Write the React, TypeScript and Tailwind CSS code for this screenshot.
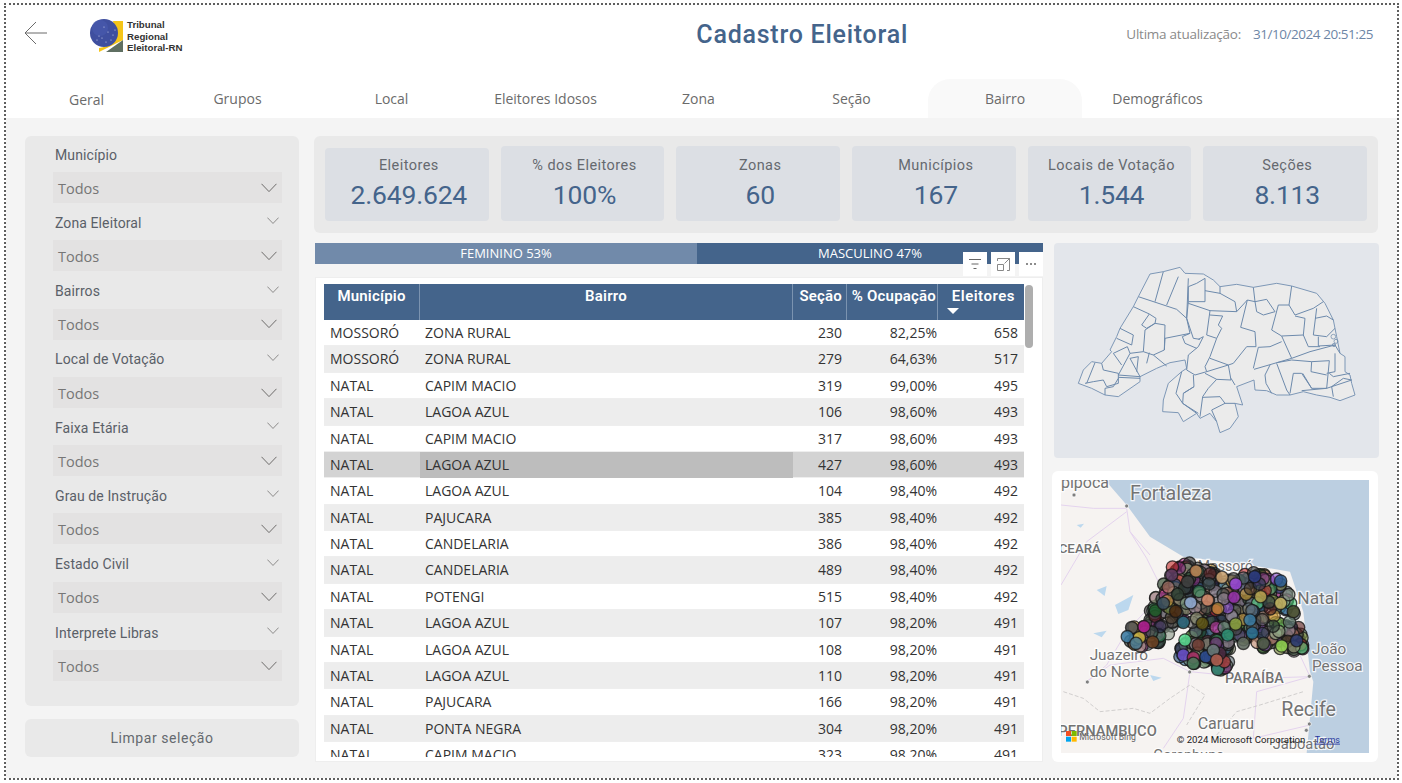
import { useMemo } from 'react';

const din = 'font-[Roboto,sans-serif]';
const segoe = "font-['Open_Sans',sans-serif]";

const tabs = ['Geral', 'Grupos', 'Local', 'Eleitores Idosos', 'Zona', 'Seção', 'Bairro', 'Demográficos'];

const filters = [
  { label: 'Município', chevron: false },
  { label: 'Zona Eleitoral', chevron: true },
  { label: 'Bairros', chevron: true },
  { label: 'Local de Votação', chevron: true },
  { label: 'Faixa Etária', chevron: true },
  { label: 'Grau de Instrução', chevron: true },
  { label: 'Estado Civil', chevron: true },
  { label: 'Interprete Libras', chevron: true },
];

const kpis = [
  { label: 'Eleitores', value: '2.649.624', tall: false },
  { label: '% dos Eleitores', value: '100%', tall: true },
  { label: 'Zonas', value: '60', tall: true },
  { label: 'Municípios', value: '167', tall: true },
  { label: 'Locais de Votação', value: '1.544', tall: true },
  { label: 'Seções', value: '8.113', tall: true },
];

const rows = [
  ['MOSSORÓ', 'ZONA RURAL', '230', '82,25%', '658'],
  ['MOSSORÓ', 'ZONA RURAL', '279', '64,63%', '517'],
  ['NATAL', 'CAPIM MACIO', '319', '99,00%', '495'],
  ['NATAL', 'LAGOA AZUL', '106', '98,60%', '493'],
  ['NATAL', 'CAPIM MACIO', '317', '98,60%', '493'],
  ['NATAL', 'LAGOA AZUL', '427', '98,60%', '493'],
  ['NATAL', 'LAGOA AZUL', '104', '98,40%', '492'],
  ['NATAL', 'PAJUCARA', '385', '98,40%', '492'],
  ['NATAL', 'CANDELARIA', '386', '98,40%', '492'],
  ['NATAL', 'CANDELARIA', '489', '98,40%', '492'],
  ['NATAL', 'POTENGI', '515', '98,40%', '492'],
  ['NATAL', 'LAGOA AZUL', '107', '98,20%', '491'],
  ['NATAL', 'LAGOA AZUL', '108', '98,20%', '491'],
  ['NATAL', 'LAGOA AZUL', '110', '98,20%', '491'],
  ['NATAL', 'PAJUCARA', '166', '98,20%', '491'],
  ['NATAL', 'PONTA NEGRA', '304', '98,20%', '491'],
  ['NATAL', 'CAPIM MACIO', '323', '98,20%', '491'],
];

const Chevron = ({ size = 16 }: { size?: number }) => (
  <svg width={size} height={size * 0.6} viewBox="0 0 16 9.6" fill="none" stroke="#605e5c" strokeWidth="0.9">
    <path d="M0.5 0.8 L8 8.6 L15.5 0.8" />
  </svg>
);

const Logo = () => (
  <svg width="42" height="36" viewBox="0 0 42 36">
    <path d="M11 34 L11 30 C22 29 27 22 27 14 L25 3 L35 3 L35 22 Z" fill="#f5c518" />
    <path d="M18 34 L35 22 L35 34 Z" fill="#5f6f62" />
    <circle cx="16" cy="15" r="14" fill="#3f4f9f" />
    <circle cx="12" cy="10" r="8" fill="#4a5bb0" opacity="0.6" />
    {[[20, 14], [25, 17], [14, 20], [9, 22], [18, 24], [23, 22], [16, 9], [11, 18], [27, 12]].map(([x, y]) => (
      <circle key={`${x}-${y}`} cx={x} cy={y} r="0.6" fill="#cdd3ee" />
    ))}
  </svg>
);

const outlinePts = [
  [300, 102], [340, 95], [390, 82], [405, 100], [460, 102], [490, 120], [510, 140], [560, 133], [610, 142], [680, 130], [725, 138],
  [800, 160], [825, 190], [850, 240], [860, 290], [870, 340], [885, 350], [885, 395], [900, 405], [905, 430], [915, 465], [870, 482],
  [840, 472], [800, 465], [760, 455], [720, 465], [680, 465], [650, 452], [615, 450], [612, 420], [560, 440], [578, 495], [555, 490],
  [565, 530], [540, 565], [510, 578], [500, 545], [480, 520], [450, 535], [440, 520], [400, 545], [385, 518], [338, 515], [340, 480],
  [355, 430], [395, 395], [410, 385], [405, 360], [360, 368], [320, 385], [270, 410], [270, 425], [205, 470], [165, 465], [125, 445],
  [85, 430], [100, 390], [125, 365], [155, 370], [185, 335], [180, 330], [200, 290], [210, 265], [250, 200], [265, 170],
];

const outline = `M${outlinePts.map((p) => p.join(',')).join(' ')} Z`;

const borders = [
  'M340,95 315,185', 'M385,110 350,195', 'M265,170 380,208 410,235 415,185 465,185 465,115 440,130 415,140 415,185',
  'M415,115 410,235 430,295 450,298', 'M415,190 480,212 560,215 555,185 510,160 465,152', 'M510,140 510,160',
  'M610,142 615,185 620,215 640,225 675,215 650,178 615,185', 'M560,215 592,180 615,185', 'M592,180 572,262 615,275 618,320',
  'M725,138 717,195 735,225 790,205 820,185', 'M717,195 685,195 665,270 695,288 760,285 775,320 810,320',
  'M735,228 765,235 760,285', 'M800,205 790,285 830,290 855,265', 'M795,235 830,228 850,240', 'M805,290 805,318 855,315 870,340',
  'M695,288 725,355 780,335 855,315', 'M695,305 660,320 625,322 610,385', 'M725,355 612,388', 'M618,320 590,320 550,370 535,375 480,355',
  'M480,212 470,285 500,295 515,265 505,255 518,228 480,225', 'M500,295 480,350 465,380 470,395 435,405 410,390 415,345 445,320 460,290 445,298',
  'M410,235 420,280 397,290 405,310 440,325', 'M420,280 345,295 343,330 310,345 280,335 285,270 315,250 345,255 343,330',
  'M298,222 275,255 290,265 315,250 318,235 298,222', 'M250,200 298,222', 'M250,285 210,265', 'M250,285 245,315 200,295', 'M280,335 240,340 232,320 190,340 215,375',
  'M310,345 350,378', 'M240,340 205,405 270,410 240,355 265,350 260,395', 'M298,338 290,370', 'M155,370 160,390 205,400 205,430 170,440 160,420 130,425 105,430',
  'M135,368 110,430', 'M205,415 190,440 165,445 165,465', 'M270,415 205,412', 'M470,395 535,375 543,420 500,418 465,400', 'M500,418 475,445 458,470 450,530',
  'M430,405 432,440 400,460 398,490 440,520', 'M395,395 378,460 398,490', 'M432,440 400,460', 'M458,472 510,470 525,490 485,510 500,545', 'M398,490 445,520',
  'M525,490 555,490', 'M543,415 555,435', 'M680,370 710,450 720,465', 'M660,375 645,405 648,430 665,460', 'M680,368 725,360 785,365 838,362 830,445 785,445 755,400 730,400 720,460',
  'M785,365 783,395 830,405', 'M758,400 785,445', 'M855,340 855,395 830,400', 'M830,445 905,420 880,415 845,440 850,470', 'M838,400 850,410 900,400', 'M755,452 830,445',
];

const cityLoops = [[850, 290, 7], [858, 304, 6], [852, 315, 5]];

const RnMap = () => (
  <svg viewBox="0 0 1020 690" className="block h-[230px] w-[340px] max-w-none" fill="none">
    <path d={outline} fill="#ebebeb" stroke="#7d97b6" strokeWidth="3" strokeLinejoin="round" />
    {borders.map((d) => (
      <path key={d} d={d} stroke="#6d8aac" strokeWidth="3" strokeLinejoin="round" />
    ))}
    {cityLoops.map(([cx, cy, r]) => (
      <circle key={cx + cy} cx={cx} cy={cy} r={r} stroke="#6d8aac" strokeWidth="2.2" />
    ))}
  </svg>
);

const dotColors = [
  '#2f2f2f', '#3a3a3a', '#1f3b1f', '#4a3a2a', '#2a3a55', '#3b4a4a', '#555555', '#7a2a7a', '#c23fa0', '#2e8b57', '#6fae4f', '#8a4fd0',
  '#b9776a', '#3e7aa8', '#7f8f3f', '#4fd07a', '#5a2020', '#9a9a7a', '#274e7a', '#d0a040', '#c22f2f', '#202040', '#60707a', '#404040',
  '#8a9a8a', '#a0a888', '#33443a', '#7a8a9a', '#8fb08f', '#c08a70', '#6a8a7a', '#9a8a9a',
];

const hilite = [
  [557, 357, '#9a48d8'], [695, 543, '#8fd050'], [405, 525, '#58d890'], [400, 570, '#6a50c8'], [430, 578, '#a02860'], [503, 613, '#3a8a78'],
  [268, 518, '#c8b040'], [523, 590, '#a04040'], [468, 575, '#2a4a90'], [445, 540, '#6a3a30'], [308, 531, '#6a4020'], [600, 465, '#3a7aa0'],
  [632, 395, '#b0a050'], [692, 415, '#c0b060'], [730, 440, '#4a5030'], [422, 413, '#90a8d0'], [473, 405, '#d08868'], [552, 397, '#9030a0'],
  [614, 335, '#2a3a80'], [692, 348, '#2a5a90'], [516, 337, '#c8a070'], [413, 350, '#404040'], [438, 318, '#b87a50'], [365, 330, '#5a3a60'],
  [316, 437, '#1f5a28'], [377, 439, '#4a2a10'], [557, 477, '#8aa040'], [607, 504, '#2a6a90'], [533, 510, '#2a8a70'], [740, 527, '#2a3a70'],
  [457, 475, '#5a5010'], [282, 485, '#b02090'], [383, 388, '#2a3a30'], [340, 415, '#3a5060'], [400, 472, '#2a6a7a'],
  [510, 565, '#4a2a40'], [490, 556, '#6a7a7a'], [430, 595, '#4a7a5a'], [500, 585, '#b06050'], [580, 535, '#606a60'], [640, 535, '#4a5a40'],
  [245, 488, '#555555'], [232, 515, '#3a7aa0'], [258, 535, '#4a7a90'],
] as const;

const inside = (x: number, y: number) => {
  let hit = false;
  for (let i = 0, j = outlinePts.length - 1; i < outlinePts.length; j = i++) {
    const [xi, yi] = outlinePts[i];
    const [xj, yj] = outlinePts[j];
    if (yi > y !== yj > y && x < ((xj - xi) * (y - yi)) / (yj - yi) + xi) hit = !hit;
  }
  return hit;
};

// sorteia pontos dentro do contorno do estado e leva para as coordenadas do mapa
const useDots = () =>
  useMemo(() => {
    let seed = 41;
    const rnd = () => {
      seed = (seed * 16807) % 2147483647;
      return seed / 2147483647;
    };
    const out: { x: number; y: number; c: string }[] = [];
    while (out.length < 560) {
      const sx = 85 + rnd() * 830;
      const sy = 82 + rnd() * 496;
      if (!inside(sx, sy)) continue;
      out.push({
        x: 222 + (sx - 85) * 0.655,
        y: 290 + (sy - 82) * 0.68,
        c: dotColors[Math.floor(rnd() * dotColors.length)],
      });
    }
    return out;
  }, []);

const labelClass = 'fill-[#737373] stroke-white/80 font-[Roboto,sans-serif] [paint-order:stroke]';

const BingMap = () => {
  const dots = useDots();
  return (
    <svg viewBox="33 45 924 819" className="block h-[273px] w-[308px]">
      <rect x="33" y="45" width="924" height="819" fill="#f6f3f1" />
      <path d="M165,45 L230,120 L300,215 L400,275 L600,300 L720,320 L760,440 L780,620 L790,650 L770,864 L957,864 L957,45 Z" fill="#bccfe1" />
      <g fill="none" stroke="#e4d3ee" strokeWidth="3">
        <path d="M33,120 L130,130 L230,130 L240,200 L300,270" />
        <path d="M230,140 L110,230 L33,360" />
        <path d="M240,200 L290,280 L340,380 L230,500 L170,600 L110,650" />
        <path d="M110,650 L180,600 L340,580 L420,620 L620,640 L780,635" />
        <path d="M420,620 L400,760 L340,850" />
        <path d="M780,635 L620,680 L610,820 L780,780" />
        <path d="M745,560 L780,635" />
      </g>
      <g fill="#bcd8ee">
        <path d="M80,180 l22,-4 l-10,12 Z" />
        <path d="M140,375 l30,-12 l-6,30 Z" />
        <path d="M195,420 l55,-30 l-15,45 l-30,12 Z" />
        <path d="M130,505 l40,-8 l-15,20 Z" />
        <path d="M300,630 l35,8 l-25,10 Z" />
      </g>
      <path d="M40,680 L100,700 L150,740 L250,730 L300,745 L360,700 L420,660 L465,690 L410,780" fill="none" stroke="#c9c6c6" strokeWidth="2.5" strokeDasharray="12 6" />
      <path d="M500,810 L560,740 L630,720 L760,680" fill="none" stroke="#c9c6c6" strokeWidth="2.5" strokeDasharray="12 6" />
      <g fill="#7f7f7f">
        {[[72, 90], [230, 123], [112, 651], [419, 621], [778, 634], [778, 777], [769, 796]].map(([x, y]) => (
          <circle key={`${x}-${y}`} cx={x} cy={y} r="6" stroke="#fff" strokeWidth="2" />
        ))}
      </g>
      <g strokeWidth="7" className={labelClass}>
        <text x="240" y="105" fontSize="59">Fortaleza</text>
        <text x="33" y="68" fontSize="48" textAnchor="start" dx="-55">Itapipoca</text>
        <text x="26" y="264" fontSize="40" fontWeight="500">CEARÁ</text>
        <text x="443" y="318" fontSize="42">Mossoró</text>
        <text x="742" y="416" fontSize="52">Natal</text>
        <text x="786" y="567" fontSize="46">João</text>
        <text x="786" y="619" fontSize="46">Pessoa</text>
        <text x="119" y="585" fontSize="46">Juazeiro</text>
        <text x="119" y="637" fontSize="46">do Norte</text>
        <text x="525" y="654" fontSize="43" fontWeight="500">PARAÍBA</text>
        <text x="694" y="752" fontSize="59">Recife</text>
        <text x="443" y="792" fontSize="48">Caruaru</text>
        <text x="25" y="812" fontSize="44" fontWeight="500">PERNAMBUCO</text>
        <text x="668" y="853" fontSize="44">Jaboatão</text>
        <text x="310" y="884" fontSize="44">Garanhuns</text>
      </g>
      {dots.map((d, i) => (
        <circle key={i} cx={d.x} cy={d.y} r="18.5" fill={d.c} fillOpacity="0.62" stroke="#161616" strokeOpacity="0.8" strokeWidth="4" />
      ))}
      {hilite.map(([x, y, c]) => (
        <circle key={`${x}-${y}`} cx={x} cy={y} r="18.5" fill={c} fillOpacity="0.88" stroke="#161616" strokeOpacity="0.75" strokeWidth="4" />
      ))}
      <g>
        <rect x="48" y="798" width="15" height="15" fill="#f25022" />
        <rect x="65" y="798" width="15" height="15" fill="#7fba00" />
        <rect x="48" y="815" width="15" height="15" fill="#00a4ef" />
        <rect x="65" y="815" width="15" height="15" fill="#ffb900" />
        <text x="88" y="824" fontSize="26" className="fill-[#666] font-[Roboto,sans-serif]">Microsoft Bing</text>
        <text x="380" y="833" fontSize="29" className="fill-[#222] font-[Roboto,sans-serif]">© 2024 Microsoft Corporation</text>
        <text x="794" y="833" fontSize="27" textDecoration="underline" className="fill-[#2b3a9f] font-[Roboto,sans-serif]">Terms</text>
      </g>
    </svg>
  );
};

const Filter = ({ label, chevron }: { label: string; chevron: boolean }) => (
  <div className="flex h-[68.3px] flex-col">
    <div className={`flex h-[36px] items-center justify-between pl-[30px] pr-[20px] pt-[2px] ${din} text-[14px] tracking-[0.1px] text-[#5a6068]`}>
      <span>{label}</span>
      {chevron && (
        <span className="mb-[5px]">
          <Chevron size={12} />
        </span>
      )}
    </div>
    <div className={`ml-[28px] mr-[17px] flex h-[31px] items-center justify-between bg-[#e3e2e2] pl-[5px] pr-[5px] ${segoe} text-[14.5px] text-[#767676]`}>
      <span className="pt-[2px]">Todos</span>
      <Chevron size={16} />
    </div>
  </div>
);

const Kpi = ({ label, value, tall }: { label: string; value: string; tall: boolean }) => (
  <div className={`flex flex-1 flex-col items-center justify-end rounded-[4px] bg-[#dcdfe4] pb-[9px] pl-[4px] ${din} ${tall ? 'h-[75px]' : 'h-[73px]'}`}>
    <span className="text-[14.5px] leading-[22px] tracking-[0.45px] text-[#65696f]">{label}</span>
    <span className="mt-[1px] text-[26.5px] leading-[34px] tracking-[-0.2px] text-[#44648b]">{value}</span>
  </div>
);

const cols = 'grid grid-cols-[96px_373px_54px_91px_86px]';

const Table = () => (
  <div className="relative mt-[13px] h-[485px] border border-[#eeeeee] bg-white pl-[8px] pr-[18px] pt-[6px]">
    <div className={`${cols} h-[36px] whitespace-nowrap bg-[#44648b] ${din} text-[15px] font-semibold leading-[24px] tracking-[0.2px] text-white`}>
      <span className="border-r border-[#7b93b0] text-center">Município</span>
      <span className="border-r border-[#7b93b0] text-center">Bairro</span>
      <span className="border-r border-[#7b93b0] pr-[4px] text-right">Seção</span>
      <span className="border-r border-[#7b93b0] pr-[1px] text-right">% Ocupação</span>
      <span className="relative pr-[9px] text-right tracking-[0.5px]">
        Eleitores
        <i className="absolute left-[9px] top-[24px] h-0 w-0 border-x-[6px] border-t-[6px] border-x-transparent border-t-white" />
      </span>
    </div>
    <div className={`h-[437px] overflow-hidden ${segoe} text-[14px] text-[#333333]`}>
      {rows.map((r, i) => {
        const selected = i === 5;
        return (
          <div
            key={`${r[2]}-${i}`}
            className={`${cols} h-[26.38px] items-center border-b border-[#eeeeee] leading-[26px] ${
              selected ? 'bg-[#d3d3d3]' : i % 2 ? 'bg-[#ededed]' : 'bg-white'
            }`}
          >
            <span className="pl-[6px]">{r[0]}</span>
            <span className={`h-full pl-[5px] ${selected ? 'bg-[#bdbdbd]' : ''}`}>{r[1]}</span>
            <span className="pr-[5px] text-right">{r[2]}</span>
            <span className="pr-[1px] text-right">{r[3]}</span>
            <span className="pr-[6px] text-right">{r[4]}</span>
          </div>
        );
      })}
    </div>
    <div className="absolute right-[9px] top-[7px] h-[63px] w-[8px] rounded-full bg-[#aeaeae]" />
  </div>
);

const VisualHeader = () => (
  <div className="absolute right-0 top-[9px] flex gap-[4px]">
    <div className="flex h-[24px] w-[24px] items-center justify-center bg-white">
      <svg width="14" height="12" viewBox="0 0 14 12" fill="none" stroke="#666" strokeWidth="1">
        <path d="M1 1.5H13M3.5 6H10.5M5.5 10.5H8.5" />
      </svg>
    </div>
    <div className="flex h-[24px] w-[24px] items-center justify-center bg-white">
      <svg width="13" height="13" viewBox="0 0 13 13" fill="none" stroke="#888" strokeWidth="1">
        <path d="M0.5 6.5V12.5H6.5V6.5H0.5M0.5 3V0.5H12.5V12.5H10M7.5 5.5L12.5 0.5M9 0.5H12.5V4" />
      </svg>
    </div>
    <div className="flex h-[24px] w-[24px] items-center justify-center gap-[2px] bg-white">
      <i className="h-[2px] w-[2px] rounded-full bg-[#666]" />
      <i className="h-[2px] w-[2px] rounded-full bg-[#666]" />
      <i className="h-[2px] w-[2px] rounded-full bg-[#666]" />
    </div>
  </div>
);

export default function App() {
  return (
    <div className="h-[783px] w-[1402px] overflow-hidden bg-white pl-[4px] pr-[3px] pt-[3px]">
      <div className="flex h-[777px] flex-col border-2 border-dotted border-[#5f5f5f]">
        <header className="flex h-[74px] shrink-0 items-start">
          <div className="flex w-[472px] shrink-0 items-start">
            <svg width="24" height="24" viewBox="0 0 24 24" fill="none" stroke="#6b6b6b" strokeWidth="1" className="ml-[18px] mt-[16px]">
              <path d="M23 12H1M12 1L1 12L12 23" />
            </svg>
            <div className="ml-[40px] mt-[13px]">
              <Logo />
            </div>
            <div className="ml-[-3px] mt-[14px] font-['Liberation_Sans',sans-serif] text-[9.7px] font-bold leading-[11.7px] text-[#333]">
              <div>Tribunal</div>
              <div>Regional</div>
              <div>Eleitoral-RN</div>
            </div>
          </div>
          <h1 className={`flex-1 pt-[13px] text-center ${din} text-[25px] font-medium leading-[34px] tracking-[0.75px] text-[#44648b]`}>
            Cadastro Eleitoral
          </h1>
          <div className={`mr-[24px] mt-[19px] flex gap-[12px] ${segoe} text-[13.5px] leading-[20px]`}>
            <span className="tracking-[-0.25px] text-[#8a8a8a]">Ultima atualização:</span>
            <span className="tracking-[-0.45px] text-[#6d86a6]">31/10/2024 20:51:25</span>
          </div>
        </header>

        <nav className={`flex h-[39px] shrink-0 pl-[4px] ${segoe} text-[14px] text-[#6b6b6b]`}>
          {tabs.map((t, i) => (
            <div
              key={t}
              className={`flex items-center justify-center ${i === 0 ? 'pt-[2px]' : ''} ${
                i === 6 ? 'w-[154px] rounded-t-[22px] bg-[#f9f9f9]' : 'w-[153px]'
              } ${i === 1 ? 'pr-[4px]' : ''} ${i === 2 ? 'pr-[2px]' : ''} ${i === 7 ? 'pr-[2px]' : ''}`}
            >
              {t}
            </div>
          ))}
        </nav>

        <main className="flex min-h-0 flex-1 gap-[15px] bg-[#f4f4f4] pl-[19px] pr-[18px] pt-[18px]">
          <aside className="flex w-[274px] shrink-0 flex-col gap-[13px]">
            <div className="h-[570px] rounded-[6px] bg-[#e9e9e9]">
              {filters.map((f) => (
                <Filter key={f.label} {...f} />
              ))}
            </div>
            <button className={`h-[38px] rounded-[6px] bg-[#e9e9e9] ${din} text-[14px] font-normal tracking-[0.55px] text-[#65696f]`}>
              Limpar seleção
            </button>
          </aside>

          <section className="flex w-[1064px] flex-col">
            <div className="flex h-[97px] items-end gap-[12px] rounded-[6px] bg-[#e9e9e9] px-[11px] pb-[12px]">
              {kpis.map((k) => (
                <Kpi key={k.label} {...k} />
              ))}
            </div>

            <div className="mt-[10px] flex gap-[11px] pl-[1px]">
              <div className="relative w-[728px]">
                <div className={`flex h-[21px] ${segoe} text-[13px] leading-[21px] text-white`}>
                  <div className="w-[382px] bg-[#718aaa] text-center">FEMININO 53%</div>
                  <div className="flex-1 bg-[#44648b] text-center">MASCULINO 47%</div>
                </div>
                <VisualHeader />
                <Table />
              </div>

              <div className="flex w-[325px] flex-col gap-[13px]">
                <div className="h-[215px] overflow-hidden rounded-[4px] bg-[#e3e6eb]">
                  <div className="ml-[-4px] mt-[-3px]">
                    <RnMap />
                  </div>
                </div>
                <div className="ml-[-2px] h-[291px] w-[326px] rounded-[6px] bg-white p-[9px]">
                  <BingMap />
                </div>
              </div>
            </div>
          </section>
        </main>
      </div>
    </div>
  );
}
